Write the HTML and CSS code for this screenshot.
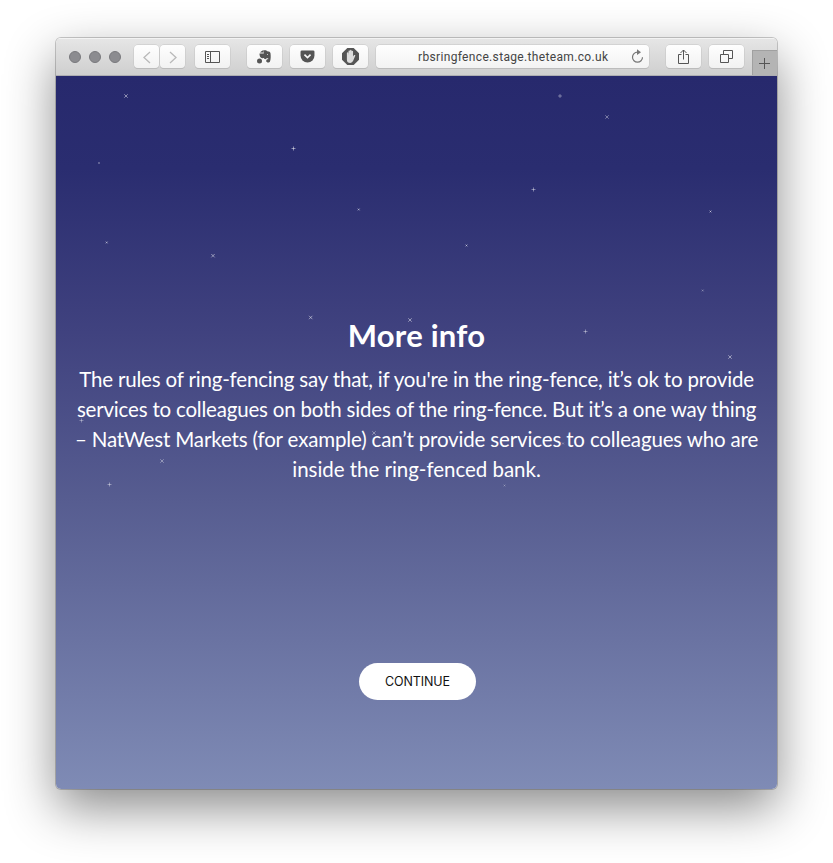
FILE: index.html
```html
<!DOCTYPE html>
<html lang="en">
<head>
<meta charset="utf-8">
<title>More info</title>
<link rel="stylesheet" href="styles.css">
</head>
<body>
<main class="window">
  <header class="toolbar">
    <div class="lights"><i></i><i></i><i></i></div>
    <div class="nav">
      <button class="tool half" aria-label="Back"><svg width="24" height="22" viewBox="0 0 24 22"><path class="faint" d="M15 6l-6 5.500 6 5.500"/></svg></button>
      <button class="tool half" aria-label="Forward"><svg width="24" height="22" viewBox="0 0 24 22"><path class="faint" d="M9 6l6 5.500-6 5.500"/></svg></button>
    </div>
    <button class="tool sidebar" aria-label="Sidebar"><svg width="15" height="12" viewBox="0 0 15 12"><path d="M.5.500h14v11H.5zM5.500.500v11M2 3.500h2M2 5.500h2M2 7.500h2"/></svg></button>
    <div class="extensions">
      <button class="tool" aria-label="Notes"><svg width="17" height="15" viewBox="0 0 17 15"><path class="solid" d="M5 2.500L7.500 1v2.500H4zM3.500 4.500h4.300V1.300c1.500-.4 3-.1 3.500 1 2 .2 3 .6 3.200 2 .4 3 .3 6-.5 8.200-.6 1.500-3.800 1.300-3.800-.5 0-1.400.8-1.900 2-1.700v-1c-1.500-.2-2 .2-2.400.8-1 .3-1.700-.2-1.900-1C6 9.500 3.500 9 3.500 4.500z"/><circle class="solid" cx="3.500" cy="12" r="2.500"/><circle cx="11.500" cy="5.500" r=".5" fill="#eee" stroke="none"/></svg></button>
      <button class="tool" aria-label="Save"><svg width="15" height="13" viewBox="0 0 16 14"><path class="solid" d="M2 .5h12q1.500 0 1.500 1.500v4a7.500 7.500 0 0 1-15 0V2Q.5.500 2 .5z"/><path class="tick" d="M4.700 5L8 8.200 11.300 5"/></svg></button>
      <button class="tool" aria-label="Blocker"><svg width="17" height="17" viewBox="1 1 16 16"><path class="solid" d="M6 1h6l5 5v6l-5 5H6l-5-5V6z"/><path class="hand" d="M5.600 10V5.500q.7-.8 1.300 0V8l.3-4.300q.8-.7 1.400 0V3q.7-.6 1.400 0v1q.8-.6 1.400 0v5l1-1.300q1-.4 1.200.3L11.500 13q-.7 2-2.700 2-3.200 0-3.200-3z"/></svg></button>
    </div>
    <div class="address"><span>rbsringfence.stage.theteam.co.uk</span><svg width="14" height="15" viewBox="0 0 14 15"><path class="reload" d="M7.500 3.200A5 5 0 1 0 12.500 8.200"/><path d="M7 .3L11 3.300 7 6z" fill="#777" stroke="none"/></svg></div>
    <div class="actions">
      <button class="tool" aria-label="Share"><svg width="11" height="15" viewBox="0 0 11 15"><path d="M3.500 5.500h-3v9h10v-9h-3M5.500 10.500V1M2.500 4l3-3 3 3"/></svg></button>
      <button class="tool" aria-label="Tabs"><svg width="13" height="13" viewBox="0 0 13 13"><path d="M.5 4.500h8v8h-8zM3.500 4V.500h9v8H9"/></svg></button>
    </div>
    <button class="new-tab" aria-label="New tab"><svg width="11" height="11" viewBox="0 0 11 11"><path d="M5.500 0v11M0 5.500h11"/></svg></button>
  </header>
  <section class="page">
    <svg class="stars" width="721" height="713" viewBox="56 76 721 713">
      <defs>
        <path id="x" d="M-1.700-1.700l3.400 3.400M-1.700 1.700l3.400-3.400"/>
        <path id="p" d="M0-2v4M-2 0h4"/>
        <path id="d" d="M-.9-.900l1.800 1.800M-.9.900l1.800-1.800"/>
      </defs>
      <use href="#x" x="126" y="96"/><use href="#p" x="293.500" y="148.500"/><use href="#d" x="99" y="163" opacity=".6"/>
      <use href="#d" x="358.700" y="209.500"/><use href="#d" x="106.700" y="242.500"/><use href="#x" x="213" y="255.700"/>
      <use href="#p" x="560" y="96" opacity=".75"/><use href="#x" x="607" y="117" opacity=".8"/><use href="#p" x="533.500" y="189.500" opacity=".85"/>
      <use href="#d" x="710.500" y="211.500"/><use href="#d" x="466.500" y="245.500"/><use href="#d" x="702.700" y="290.500" opacity=".6"/>
      <use href="#x" x="310.700" y="317.500"/><use href="#x" x="410" y="320"/><use href="#p" x="585.500" y="331.500" opacity=".8"/>
      <use href="#x" x="730" y="357"/><use href="#p" x="81.500" y="420.500" opacity=".7"/><use href="#x" x="162" y="461" opacity=".8"/>
      <use href="#p" x="109.500" y="484.500" opacity=".8"/><use href="#x" x="374" y="433" opacity=".8"/><use href="#d" x="563" y="443.500" opacity=".6"/>
      <use href="#d" x="504.500" y="485.500" opacity=".5"/><use href="#d" x="396" y="446" opacity=".5"/><use href="#d" x="634" y="411" opacity=".5"/>
    </svg>
    <h1>More info</h1>
    <p><span class="l1">The rules of ring-fencing say that, if you're in the ring-fence, it’s ok to provide</span> <span class="l2">services to colleagues on both sides of the ring-fence. But it’s a one way thing</span> <span class="l3">– NatWest Markets (for example) can’t provide services to colleagues who are</span> <span class="l4">inside the ring-fenced bank.</span></p>
    <button class="continue">CONTINUE</button>
  </section>
</main>
</body>
</html>
```
FILE: styles.css
```css
* { box-sizing: border-box; }
body { margin: 0; padding: 38px 56px 0; height: 863px; overflow: hidden; background: #fff; font-family: Inter, sans-serif; }
button { font: inherit; border: 0; padding: 0; }
.window { width: 721px; height: 751px; border-radius: 5px; overflow: hidden; box-shadow: 0 0 0 1px rgba(0,0,0,.2), 0 19px 50px rgba(0,0,0,.46); }
.toolbar { display: flex; height: 38px; padding: 7px 0 0 13px; background: linear-gradient(#e6e6e6, #cfcfcf); border-bottom: 1px solid #aeaeb2; box-shadow: inset 0 1px #f3f3f3; }
.toolbar svg { display: block; fill: none; stroke: #555; stroke-width: 1; }
.toolbar .solid { fill: #555; stroke: none; }
.toolbar .faint { stroke: #b9b9b9; stroke-width: 1.3; }
.toolbar .tick { stroke: #f8f8f8; stroke-width: 1.8; }
.toolbar .hand { fill: #ddd; stroke: none; }
.lights { display: flex; gap: 8px; padding-top: 6px; width: 65px; }
.lights i { width: 12px; height: 12px; border-radius: 50%; background: #8c8c90; border: 1px solid #79797d; }
.nav { display: flex; gap: 1px; }
.tool { display: flex; align-items: center; justify-content: center; width: 35px; height: 23px; border-radius: 4px; background: linear-gradient(#fefefe, #f2f2f2); box-shadow: 0 0 0 .5px #c4c4c4, 0 1px 0 #b5b5b5; }
.half { width: 25px; }
.sidebar { margin-left: 10px; }
.extensions { display: flex; gap: 8px; margin-left: 17px; }
.address { display: flex; align-items: center; width: 273px; height: 23px; margin-left: 8px; padding: 0 5px 0 42px; border-radius: 4px; background: linear-gradient(#fefefe, #f3f3f3); box-shadow: 0 0 0 .5px #c4c4c4, 0 1px 0 #b5b5b5; font: 12px Roboto, sans-serif; letter-spacing: .34px; color: #444; white-space: nowrap; justify-content: space-between; }
.address .reload { stroke: #777; stroke-width: 1.2; }
.actions { display: flex; gap: 8px; margin-left: 17px; }
.new-tab { display: flex; align-items: center; justify-content: center; width: 25px; height: 25px; margin: 5px 0 0 auto; padding: 1px 2px 0 0; background: #b4b4b4; border: solid #a0a0a0; border-width: 1px 0 0 1px; }
.page { position: relative; display: flex; flex-direction: column; align-items: center; height: 713px; padding-top: 235px; color: #fff; background: linear-gradient(#27296d 0%, #2a2d70 13%, #40427f 36%, #565c90 59%, #7f8bb5 100%); }
.stars { position: absolute; left: 0; top: 0; fill: none; stroke: rgba(255,255,255,.6); stroke-width: .8; }
h1 { margin: 0; font: bold 31px/48px Lato, sans-serif; letter-spacing: .25px; white-space: nowrap; }
p { margin: 5px 0 0; display: flex; flex-direction: column; align-items: center; font: 20.500px/30px Lato, sans-serif; white-space: nowrap; }
.l1 { letter-spacing: -.18px; }
.l2 { letter-spacing: -.19px; }
.l3 { letter-spacing: -.155px; }
.l4 { letter-spacing: -.03px; }
.continue { margin-top: 179px; width: 117px; height: 37px; border-radius: 19px; background: #fff; color: #111; font: 12.500px Inter, sans-serif; padding-left: 1px; letter-spacing: -.1px; position: relative; left: .5px; }
```
